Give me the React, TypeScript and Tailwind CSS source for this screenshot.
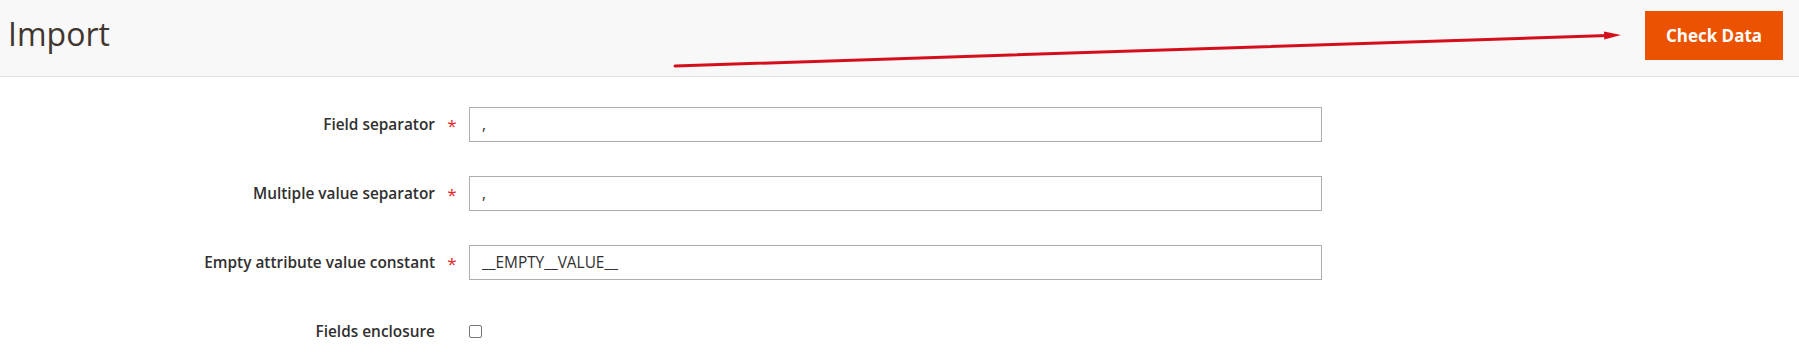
import React from "react";

const font = { fontFamily: '"Open Sans", "Noto Sans", sans-serif' };

function Row({ label, required, children }: { label: string; required?: boolean; children: React.ReactNode }) {
  return (
    <div className="flex items-center h-[35px]">
      <div className="w-[435px] text-right text-[15.4px] font-semibold text-[#303030]">{label}</div>
      <div className="w-[34px] flex justify-center">
        {required ? <span className="text-[#e22626] text-[17px] leading-none relative top-[1px]">*</span> : null}
      </div>
      {children}
    </div>
  );
}

function TextInput({ value }: { value: string }) {
  return (
    <input
      readOnly
      value={value}
      className="w-[853px] h-[35px] border border-[#adadad] bg-white px-[12px] text-[15.4px] text-[#303030] outline-none"
      style={font}
    />
  );
}

export default function App() {
  return (
    <div className="relative w-[1799px] h-[356px] bg-white overflow-hidden" style={font}>
      <header className="h-[77px] bg-[#f8f8f8] border-b border-[#e3e3e3] flex items-start justify-between pl-[8px] pr-[16px]">
        <h1 className="text-[32px] leading-[32px] font-normal text-[#41362f] mt-[18px]">Import</h1>
        <button className="mt-[11px] w-[138px] h-[49px] bg-[#eb5202] text-white text-[17px] font-bold">
          Check Data
        </button>
      </header>
      <main className="pt-[30px] flex flex-col gap-[34px]">
        <Row label="Field separator" required>
          <TextInput value="," />
        </Row>
        <Row label="Multiple value separator" required>
          <TextInput value="," />
        </Row>
        <Row label="Empty attribute value constant" required>
          <TextInput value="__EMPTY__VALUE__" />
        </Row>
        <Row label="Fields enclosure">
          <span className="block w-[13px] h-[13px] border border-[#767676] rounded-[2px] bg-white" />
        </Row>
      </main>
      <svg className="absolute left-0 top-0 pointer-events-none" width="1799" height="356">
        <line x1="675" y1="66" x2="1608" y2="35.5" stroke="#d40f1b" strokeWidth="3" strokeLinecap="round" />
        <polygon points="1621,35 1604,31.5 1604.3,39.5" fill="#d40f1b" />
      </svg>
    </div>
  );
}
